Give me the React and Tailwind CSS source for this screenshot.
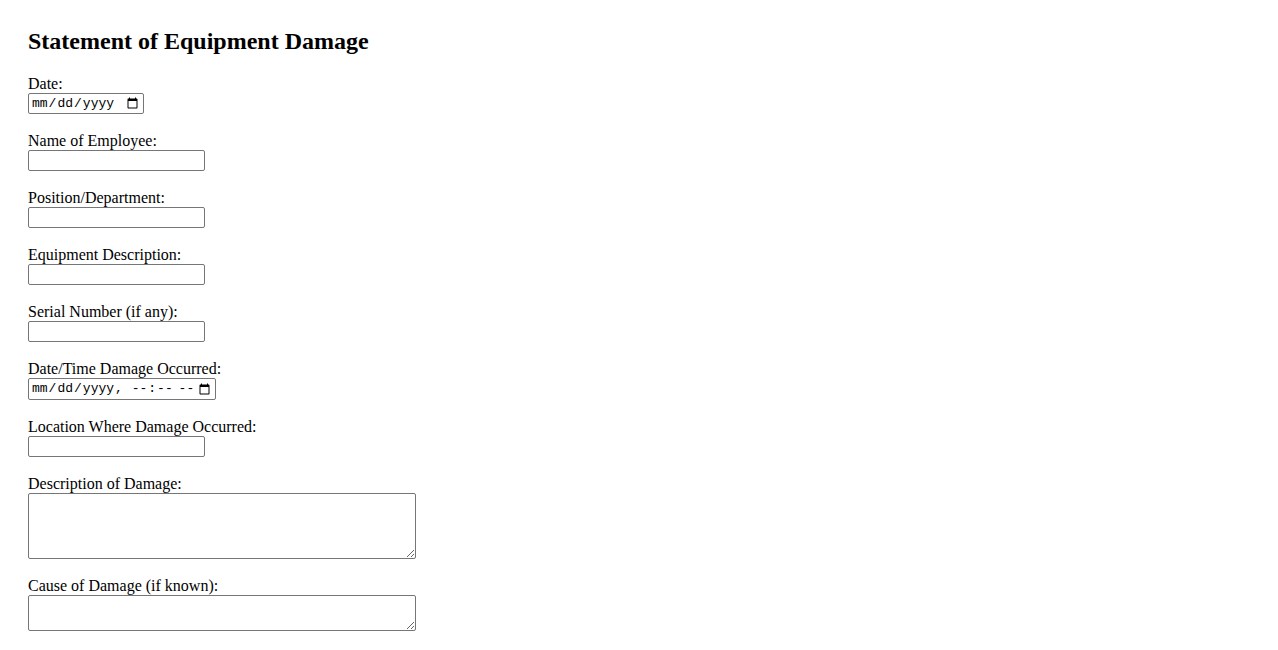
import React from "react";

const inputCls =
  "block h-[21px] w-[177px] border border-[#767676] rounded-[2px] bg-white px-[2px] py-[1px] text-[13px] text-black font-['Liberation_Mono',monospace] outline-none";

function Field({ label, children, last }) {
  return (
    <div className={last ? "flex flex-col" : "flex flex-col mb-[16px]"}>
      <label className="block leading-[22px] h-[20px] text-[16px]">{label}</label>
      {children}
    </div>
  );
}

export default function App() {
  return (
    <div className="min-h-[650px] bg-white text-black font-['Liberation_Serif',serif] pt-[27px] pl-[28px]">
      <h2 className="text-[24px] font-bold leading-[28px] h-[28px]">Statement of Equipment Damage</h2>
      <form className="mt-[18px] flex flex-col items-start">
        <Field label="Date:">
          <input type="date" className={inputCls + " !w-[116px]"} />
        </Field>
        <Field label="Name of Employee:">
          <input type="text" className={inputCls} />
        </Field>
        <Field label="Position/Department:">
          <input type="text" className={inputCls} />
        </Field>
        <Field label="Equipment Description:">
          <input type="text" className={inputCls} />
        </Field>
        <Field label="Serial Number (if any):">
          <input type="text" className={inputCls} />
        </Field>
        <Field label="Date/Time Damage Occurred:">
          <input type="datetime-local" className={inputCls + " !w-[188px] !h-[22px]"} />
        </Field>
        <Field label="Location Where Damage Occurred:">
          <input type="text" className={inputCls} />
        </Field>
        <Field label="Description of Damage:">
          <textarea className="block h-[66px] w-[388px] border border-[#767676] rounded-[2px] bg-white px-[2px] py-[2px] text-[13px] font-['Liberation_Mono',monospace] outline-none" />
        </Field>
        <Field label="Cause of Damage (if known):" last>
          <textarea className="block h-[36px] w-[388px] border border-[#767676] rounded-[2px] bg-white px-[2px] py-[2px] text-[13px] font-['Liberation_Mono',monospace] outline-none" />
        </Field>
      </form>
    </div>
  );
}
